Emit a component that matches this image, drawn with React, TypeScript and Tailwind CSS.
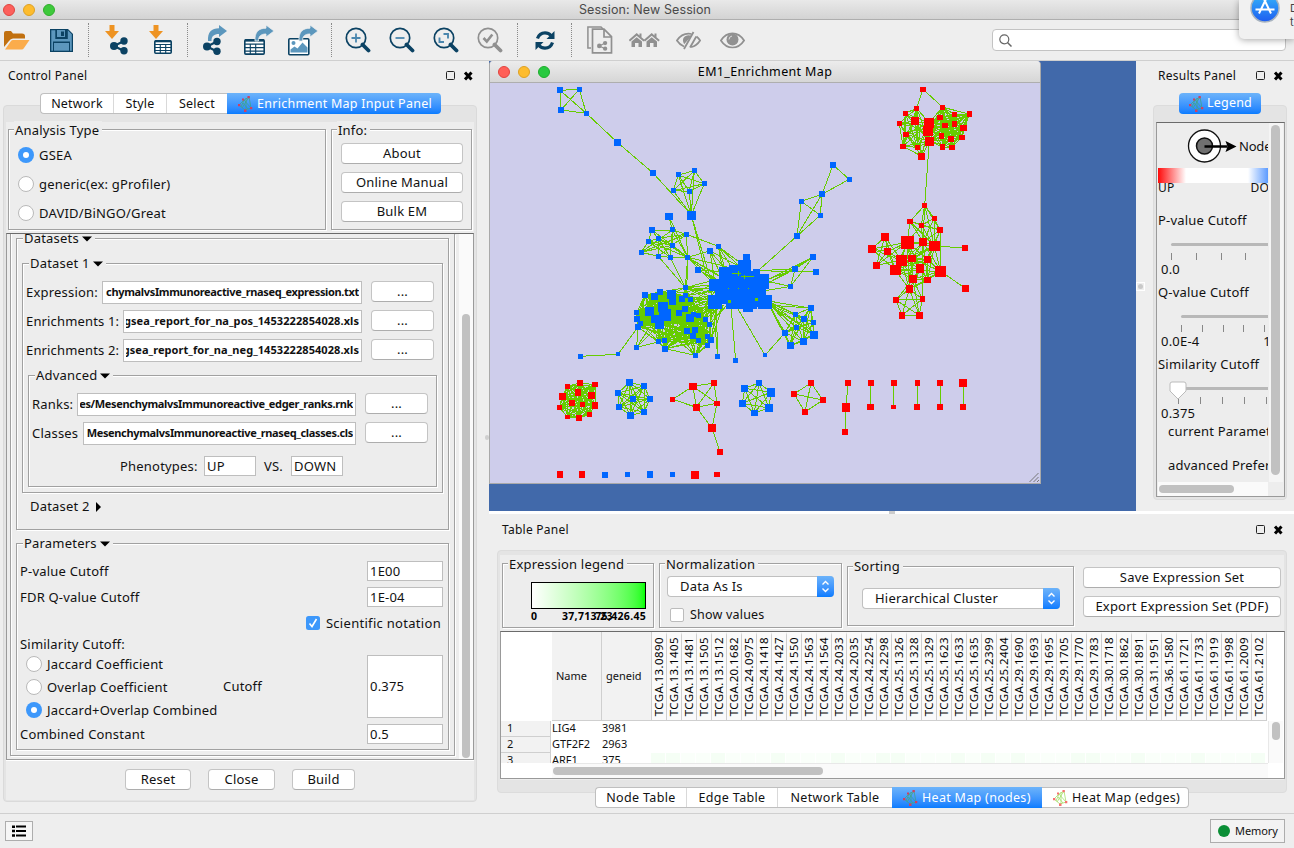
import React from "react";

type Box = [number, number, number, number?];
type Pt = [number, number];

const EDGE = "#66cc00";
const BLUE = "#0066ff";
const RED = "#ff0000";

/* ---------- network data (thirds of a pixel, relative to each origin) ---------- */

const mainOrigin: Pt = [540, 80];
const redOrigin: Pt = [840, 80];
const rowOrigin: Pt = [540, 365];

const square: Box[] = [[60, 31, 18], [118, 28, 15], [63, 90, 18], [139, 100, 15]];
const chain: Box[] = [[232, 187, 20], [339, 279, 18]];
const fan: Box[] = [[415, 285, 16], [463, 272, 15], [493, 311, 16], [400, 332, 15], [448, 334, 15], [454, 405, 27]];
const upperRight: Box[] = [[879, 255, 18], [928, 298, 15], [846, 343, 19], [784, 364, 15], [841, 406, 15], [771, 468, 18]];
const mesh: Box[] = [
  [336, 450, 18], [397, 450, 16], [439, 463, 15], [355, 475, 15], [325, 484, 15],
  [397, 496, 15], [304, 517, 15], [355, 529, 15], [391, 532, 15], [443, 532, 15],
];
const feeders: Box[] = [[510, 513, 18], [535, 499, 15], [474, 569, 18]];
const dense: Box[] = [
  [315, 645, 18], [343, 650, 20], [360, 636, 18], [393, 642, 26], [397, 665, 20], [426, 658, 18], [437, 647, 14],
  [452, 657, 14], [290, 698, 15], [291, 717, 18], [302, 730, 14], [294, 741, 18], [328, 694, 26], [369, 680, 30],
  [375, 705, 36], [345, 717, 24], [358, 733, 28], [416, 700, 18], [435, 687, 18], [450, 713, 24], [460, 702, 14],
  [475, 708, 16], [497, 717, 14], [508, 733, 15], [441, 751, 17], [465, 750, 18], [459, 768, 18], [475, 782, 15],
  [503, 769, 15], [513, 780, 18], [503, 796, 15], [376, 806, 18], [374, 781, 14], [355, 786, 16],
  [466, 826, 15], [290, 802, 15], [436, 623, 15],
];
const outliers: Box[] = [[122, 829, 15], [234, 823, 12], [533, 829, 15], [587, 841, 15], [675, 826, 13], [387, 409, 24, 21]];
const rightMesh: Box[] = [
  [811, 684, 17], [766, 704, 15], [792, 717, 18], [820, 727, 15], [769, 742, 15],
  [735, 758, 18], [822, 763, 23], [789, 784, 20], [750, 797, 20],
];
const sideNodes: Box[] = [[819, 531, 18], [765, 567, 18], [828, 576, 18], [752, 619, 15]];
const core: [number, number, number, number][] = [
  [609, 522, 21, 24], [595, 540, 38, 34], [568, 556, 60, 40], [537, 562, 60, 60], [536, 570, 74, 84], [604, 573, 56, 108],
  [640, 567, 20, 40], [507, 597, 60, 36], [525, 618, 150, 42], [630, 582, 57, 45], [640, 618, 38, 42], [504, 645, 42, 42],
  [540, 636, 132, 36], [655, 645, 41, 42], [558, 660, 24, 27], [582, 654, 70, 33], [609, 669, 30, 27], [600, 600, 40, 60],
];

const redTop: Box[] = [
  [230, 85, 15], [196, 100, 15], [178, 130, 15], [225, 123, 24], [198, 163, 18, 15], [189, 199, 18, 15], [233, 202, 15],
  [245, 229, 21], [267, 128, 30], [264, 152, 30], [268, 184, 27], [308, 82, 15], [343, 103, 15], [388, 102, 15, 18],
  [300, 112, 18, 15], [315, 136, 18, 15], [343, 131, 15, 18], [370, 144, 21, 18], [305, 168, 15, 18], [333, 177, 18],
  [366, 172, 18, 15], [308, 201, 15, 18], [336, 202, 18, 15], [249, 28, 18, 15],
];
const redLow: Box[] = [
  [254, 376, 15], [210, 424, 18, 15], [283, 415, 15], [244, 436, 15], [300, 450, 18], [135, 470, 24], [96, 507, 24],
  [143, 515, 21], [109, 556, 21], [202, 487, 39], [249, 486, 24], [283, 498, 33, 30], [375, 504, 18], [184, 541, 33],
  [216, 535, 24, 21], [263, 538, 21], [166, 570, 33, 30], [240, 565, 24, 27], [302, 574, 33], [219, 597, 24],
  [263, 600, 21, 18], [208, 627, 21, 24], [376, 625, 21], [168, 660, 18], [247, 657, 15, 18], [186, 706, 18, 21], [238, 706, 21],
];

const ball: Box[] = [
  [120, 54, 18], [165, 59, 18, 15], [83, 64, 15], [114, 82, 18, 21], [67, 94, 21], [154, 91, 21], [96, 114, 18],
  [127, 118, 15], [165, 121, 18, 21], [58, 127, 15], [148, 148, 15], [83, 156, 15, 12], [117, 159, 18],
];
const ring: Box[] = [
  [269, 52, 21], [312, 63, 18], [234, 84, 18], [279, 102, 18], [330, 102, 18], [237, 126, 18], [312, 141, 18], [271, 151, 21],
];
const kite: Box[] = [[459, 64, 24, 21], [522, 54, 18], [398, 103, 15], [469, 127, 21], [531, 115, 18, 15], [516, 189, 24], [540, 261, 18]];
const hexa: Box[] = [[657, 54, 18], [614, 70, 21], [693, 82, 24, 27], [607, 115, 21], [687, 129, 24], [643, 144, 21, 18]];
const quad: Box[] = [[813, 54, 18], [762, 87, 18], [849, 105, 18], [795, 141, 18]];
const pairs: Box[] = [
  [924, 54, 18], [918, 127, 24, 27], [915, 201, 18], [993, 54, 18], [991, 126, 21, 18], [1062, 54, 18], [1061, 126, 15, 12],
  [1132, 54, 15, 18], [1131, 126, 18], [1200, 54, 18], [1200, 126, 18], [1269, 54, 24], [1269, 126, 18],
];
const singlesRed: Box[] = [[60, 328, 18, 21], [126, 328, 18, 21], [465, 330, 24], [531, 328, 18, 15]];
const singlesBlue: Box[] = [[195, 330, 18], [262, 328, 15], [330, 328, 18, 21], [397, 328, 15]];

const place = (o: Pt, x: number, y: number): Pt => [o[0] + x / 3, o[1] + y / 3];

function line(o: Pt, a: Box | Pt, b: Box | Pt) {
  const [x1, y1] = place(o, a[0], a[1]);
  const [x2, y2] = place(o, b[0], b[1]);
  return `M${x1.toFixed(1)} ${y1.toFixed(1)}L${x2.toFixed(1)} ${y2.toFixed(1)}`;
}

function clique(o: Pt, list: Box[], keep: (i: number, j: number) => boolean = () => true) {
  let d = "";
  for (let i = 0; i < list.length; i++)
    for (let j = i + 1; j < list.length; j++) if (keep(i, j)) d += line(o, list[i], list[j]);
  return d;
}

const links = (o: Pt, list: Box[], ids: Pt[]) => ids.map(([a, b]) => line(o, list[a], list[b])).join("");
const pick = (list: Box[], ids: number[]) => ids.map((i) => list[i]);

function mainEdges() {
  const o = mainOrigin;
  let d = clique(o, square) + clique(o, fan) + clique(o, rightMesh, (i, j) => (i + j) % 6 !== 5);
  d += line(o, square[3], chain[0]) + line(o, chain[0], chain[1]) + line(o, chain[1], fan[5]);
  d += line(o, fan[5], [500, 590]) + line(o, fan[5], [515, 610]);
  d += links(o, upperRight, [[0, 1], [0, 2], [1, 2], [2, 3], [2, 4], [2, 5], [3, 4], [3, 5], [4, 5]]);
  d += line(o, upperRight[5], [640, 585]);
  d += clique(o, mesh, (i, j) => (i * 3 + j * 5) % 4 < 2 && !(i === 6 && j < 3));
  d += links(o, mesh, [[9, 1], [9, 2], [9, 8], [9, 5], [9, 3], [7, 8], [0, 4], [4, 6], [6, 7], [2, 3], [3, 5], [4, 9], [0, 9], [1, 8]]);
  for (const i of [7, 8, 9]) d += line(o, mesh[i], dense[36]);
  d += line(o, mesh[9], [438, 700]);
  for (const p of [[560, 560], [540, 590], [530, 600], [560, 600], [520, 610]] as Pt[]) d += line(o, mesh[9], p);
  d += line(o, mesh[2], feeders[1]) + line(o, mesh[9], feeders[0]);
  for (const p of [[600, 548], [600, 560], [580, 570], [550, 580], [556, 570]] as Pt[]) d += line(o, feeders[1], p);
  for (const p of [[560, 570], [545, 590], [600, 560], [525, 610]] as Pt[]) d += line(o, feeders[0], p);
  for (const p of [[540, 575], [530, 600], [540, 610]] as Pt[]) d += line(o, feeders[2], p);
  d += line(o, outliers[5], mesh[9]) + line(o, outliers[5], mesh[1]);
  d += clique(o, dense.slice(0, 34), (i, j) => {
    if (j < 20) return true;
    if (i < 20) return (i * 5 + j * 3) % 9 < 3;
    return (i + j) % 2 === 0;
  });
  for (const i of [14, 16, 19, 24, 26, 28, 31, 29, 30]) d += line(o, dense[34], dense[i]);
  for (const i of [11, 16, 15, 33]) d += line(o, dense[35], dense[i]);
  for (const i of [2, 3, 5, 6, 7, 17, 18]) d += line(o, dense[36], dense[i]);
  for (let i = 3; i < 34; i++) {
    if (i >= 8 && i <= 12) continue;
    if (i < 22 || i % 2) d += line(o, dense[i], [515 + ((i * 13) % 50), 605 + ((i * 29) % 75)]);
    if (i % 3 === 0) d += line(o, dense[i], [520, 650 + ((i * 7) % 30)]);
  }
  for (let k = 0; k < 6; k++) d += line(o, dense[36], [515, 602 + k * 12]);
  for (const p of [[510, 680], [530, 680], [550, 675]] as Pt[]) d += line(o, dense[34], p) + line(o, dense[29], p) + line(o, dense[31], p);
  d += links(o, outliers, [[0, 1]]) + line(o, outliers[1], dense[11]);
  d += line(o, outliers[2], [529, 680]) + line(o, outliers[2], [520, 680]) + line(o, outliers[3], [573, 680]);
  d += line(o, outliers[4], [590, 680]) + line(o, outliers[4], rightMesh[5]);
  rightMesh.forEach((n, i) => {
    d += line(o, n, [680, 662]);
    if (i % 2 === 0) d += line(o, n, [690, 676]);
  });
  for (const p of [[680, 600], [680, 612]] as Pt[]) d += line(o, sideNodes[0], p) + line(o, sideNodes[1], p);
  d += line(o, sideNodes[1], [650, 572]) + line(o, sideNodes[2], [650, 572]);
  d += line(o, sideNodes[3], [670, 602]) + line(o, sideNodes[3], [670, 633]);
  d += links(o, sideNodes, [[0, 1], [0, 3], [1, 3]]);
  return d;
}

function redEdges() {
  const o = redOrigin;
  let d = clique(o, redTop.slice(0, 11), (i, j) => (i * 2 + j) % 5 !== 4) + clique(o, redTop.slice(8, 23));
  d += links(o, redTop, [[23, 0], [23, 11], [5, 7], [2, 5], [10, 7]]) + line(o, redTop[10], redLow[0]);
  d += clique(o, pick(redLow, [5, 6, 7, 8, 9, 13, 16]), (i, j) => (i + j) % 5 !== 4);
  d += clique(o, pick(redLow, [0, 1, 2, 3, 4, 9, 10, 11]), (i, j) => (i * 3 + j) % 6 !== 5);
  d += clique(o, pick(redLow, [9, 10, 11, 13, 14, 15, 16, 17, 18, 19, 20, 21]), (i, j) => (i + j * 2) % 4 !== 3);
  d += clique(o, pick(redLow, [21, 23, 24, 25, 26]));
  d += links(o, redLow, [[11, 12], [18, 22], [19, 24], [19, 26], [10, 24], [19, 23], [4, 18], [4, 15]]);
  return d;
}

function rowEdges() {
  const o = rowOrigin;
  return (
    clique(o, ball) + clique(o, ring) + clique(o, hexa) + clique(o, quad) +
    links(o, kite, [[0, 1], [0, 2], [0, 3], [0, 4], [1, 3], [1, 4], [2, 3], [3, 4], [3, 5], [4, 5], [5, 6]]) +
    links(o, pairs, [[0, 1], [1, 2], [3, 4], [5, 6], [7, 8], [9, 10], [11, 12]])
  );
}

function Nodes({ origin, list, color }: { origin: Pt; list: Box[]; color: string }) {
  return (
    <g fill={color}>
      {list.map(([x, y, w, h = w], i) => {
        const [px, py] = place(origin, x - w / 2, y - h / 2);
        return <rect key={i} x={Math.round(px)} y={Math.round(py)} width={Math.round(w / 3)} height={Math.round(h / 3)} />;
      })}
    </g>
  );
}

function NetworkCanvas() {
  return (
    <svg className="block h-[400px] w-[550px]" viewBox="490 83 550 400" shapeRendering="crispEdges">
      <g stroke={EDGE} strokeWidth="1" fill="none">
        <path d={mainEdges()} />
        <path d={redEdges()} />
        <path d={rowEdges()} />
      </g>
      <Nodes origin={mainOrigin} color={BLUE} list={[...square, ...chain, ...fan, ...upperRight, ...mesh, ...feeders, ...dense, ...outliers, ...rightMesh, ...sideNodes]} />
      <g fill={BLUE}>
        {core.map(([x, y, w, h], i) => (
          <rect key={i} x={Math.round(540 + x / 3)} y={Math.round(80 + y / 3)} width={Math.round(w / 3)} height={Math.round(h / 3)} />
        ))}
      </g>
      <path d="M731.5 273.5h9M738.5 271v5M740.5 276.5h13M744.5 275v4" stroke={EDGE} fill="none" />
      <path d="M728 300h3v3h-3zM755 298h3v3h-3zM728 288h1v1h-1zM738 288h1v1h-1zM748 288h1v1h-1z" fill={EDGE} />
      <Nodes origin={redOrigin} color={RED} list={[...redTop, ...redLow]} />
      <Nodes origin={rowOrigin} color={RED} list={[...ball, ...kite, ...quad, ...pairs, ...singlesRed]} />
      <Nodes origin={rowOrigin} color={BLUE} list={[...ring, ...hexa, ...singlesBlue]} />
      <path d="M1029.5 482l9-9M1033.5 482l5-5M1037 482l2-2" stroke="#777" fill="none" shapeRendering="auto" />
    </svg>
  );
}

/* ---------- small widgets ---------- */

function Group({ title, className, titleClass = "ml-[5px] pt-[2px]", children }: { title: React.ReactNode; className: string; titleClass?: string; children?: React.ReactNode }) {
  return (
    <div className={`border border-[#a1a1a1] shadow-[1px_1px_0_#fff,inset_1px_1px_0_#fff] ${className}`}>
      <div className={`-mt-[9px] flex h-[18px] w-fit items-center bg-[#ededed] pr-[3px] pl-px ${titleClass}`}>{title}</div>
      {children}
    </div>
  );
}

function Button({ className = "", children }: { className?: string; children: React.ReactNode }) {
  return (
    <button className={`flex h-[21px] shrink-0 items-center justify-center rounded-[4px] border border-[#c4c4c4] border-b-[#adadad] bg-white leading-[19px] ${className}`}>
      {children}
    </button>
  );
}

function Field({ className = "", children }: { className?: string; children: React.ReactNode }) {
  return <div className={`flex shrink-0 items-center overflow-hidden border border-[#bebebe] bg-white px-[2px] ${className}`}>{children}</div>;
}

function PathField({ className, tight, children }: { className: string; tight: boolean; children: React.ReactNode }) {
  return (
    <Field className={`h-[23px] ${className}`}>
      <div className={`flex flex-1 justify-end overflow-hidden text-[11px] font-bold whitespace-nowrap ${tight ? "tracking-[-0.34px]" : "tracking-[0.07px]"}`}>
        <span>{children}</span>
      </div>
    </Field>
  );
}

function Radio({ on = false, children }: { on?: boolean; children: React.ReactNode }) {
  return (
    <label className="flex h-[17px] items-center gap-[5px]">
      {on ? (
        <span className="flex h-4 w-4 items-center justify-center rounded-full bg-[#3d98fb]">
          <span className="h-[6px] w-[6px] rounded-full bg-white" />
        </span>
      ) : (
        <span className="h-4 w-4 rounded-full border border-[#b9b9b9] bg-white" />
      )}
      <span className="pt-[2px]">{children}</span>
    </label>
  );
}

const Down = () => (
  <svg className="ml-[3px] h-[6px] w-[10px]" viewBox="0 0 10 6"><path d="M0 .5h10L5 5.500z" /></svg>
);

function PanelHeader({ title, className = "" }: { title: string; className?: string }) {
  return (
    <div className={`flex h-[30px] items-center justify-between ${className}`}>
      <span className="text-[12px] tracking-[0.25px]">{title}</span>
      <svg className="h-[12px] w-[28px]" viewBox="0 0 28 12">
        <rect x="1.5" y="1.5" width="8" height="8" rx="1" fill="none" stroke="#222" />
        <path d="M20 2.500l6.500 7M26.500 2.500l-6.500 7" stroke="#000" strokeWidth="3" />
      </svg>
    </div>
  );
}

function MapIcon({ light = false }: { light?: boolean }) {
  return (
    <svg className="h-4 w-[15px] shrink-0" viewBox="0 0 15 16">
      <path d="M6 4l5-3 2 11-6 2-6-5zM6 4l7 8M6 4L3 11M11 1L4 12M5 7l5 6M8 2v12" stroke={light ? "#a5e06a" : "#3fa58a"} strokeWidth=".8" fill="none" />
      <path d="M4 2.500h2v2H4zM9.500 0h2.300v2.300H9.500zM0 8h2.300v2.300H0zM12 11h2.300v2.300H12zM6 13.500h2.500V16H6z" fill={light ? "#f7716f" : "#d2405f"} />
    </svg>
  );
}

function Lights({ title = false }: { title?: boolean }) {
  return (
    <div className="flex gap-[8px]">
      <span className={`h-3 w-3 rounded-full border border-[#e0443e] ${title ? "bg-[#fc605c]" : "bg-[#ff5f57]"}`} />
      <span className="h-3 w-3 rounded-full border border-[#dea123] bg-[#fdbc2e]" />
      <span className={`h-3 w-3 rounded-full border ${title ? "border-[#2fae2b] bg-[#3ec93b]" : "border-[#1dad2b] bg-[#28c940]"}`} />
    </div>
  );
}

function Stepper() {
  return (
    <span className="flex h-[21px] w-[17px] items-center justify-center rounded-r-[4px] bg-linear-to-b from-[#6cb3fa] to-[#077cff]">
      <svg className="h-[13px] w-[9px]" viewBox="0 0 9 13">
        <path d="M1.500 4.500l3-3 3 3M1.500 8.500l3 3 3-3" stroke="#fff" strokeWidth="1.4" fill="none" />
      </svg>
    </span>
  );
}

function Select({ className, children }: { className: string; children: React.ReactNode }) {
  return (
    <div className={`flex h-[21px] items-center justify-between rounded-[4px] border border-r-0 border-[#c0c0c0] bg-white pl-[12px] ${className}`}>
      <span>{children}</span>
      <Stepper />
    </div>
  );
}

/* ---------- toolbar ---------- */

const NAVY = "#0b4263";
const SKY = "#5c97bd";
const GREY = "#909090";

const Sep = () => <div className="h-[34px] w-0 border-l border-dotted border-[#8a8a8a]" />;

function ShareGlyph({ color = NAVY }: { color?: string }) {
  return (
    <g fill={color}>
      <path d="M4 8.500L14 3.500M4 8.500l10 5" stroke={color} strokeWidth="2" />
      <circle cx="4" cy="8.500" r="4" /><circle cx="14" cy="3.500" r="3.700" /><circle cx="14" cy="13.300" r="3.700" />
    </g>
  );
}

function GridGlyph({ w = 18 }: { w?: number }) {
  return (
    <g fill="none" stroke={NAVY}>
      <rect x=".8" y=".8" width={w - 1.6} height="12.400" rx="1" fill="#fff" strokeWidth="1.6" />
      <path d={`M1 4.500h${w - 2}M1 7.500h${w - 2}M1 10.500h${w - 2}M6.300 4v9M11.700 4v9`} strokeWidth="1.100" />
      <path d={`M1 1.300h${w - 2}`} strokeWidth="2" />
    </g>
  );
}

const ArrowDown = () => <path d="M4.500 0h5v6h4.500L7 14 0 6h4.500z" fill="#ee9322" />;
const ArrowOut = () => <path d="M0 16C-.5 7 3.500 3.200 11 3.200V0l8 6-8 6V9C6 9 3.500 11 3.500 16z" fill={SKY} />;

function Magnifier({ color = NAVY, children }: { color?: string; children: React.ReactNode }) {
  return (
    <svg className="h-[26px] w-[26px]" viewBox="0 0 26 26" fill="none">
      <circle cx="11" cy="11" r="9.700" stroke={color} strokeWidth="1.700" />
      <path d="M17.500 17.500l6 6" stroke={color} strokeWidth="3.800" strokeLinecap="round" />
      {children}
    </svg>
  );
}

function House({ x }: { x: number }) {
  return (
    <g transform={`translate(${x} 0)`} fill={GREY}>
      <path d="M7.700 0L-.3 7l1.300 1.400L7.700 2.700l6.800 5.700L15.800 7 12.500 4.200V.6h-2v1.900z" />
      <path d="M2.500 8.600l5.200-4.400 5.300 4.400V14H9.500v-4H6v4H2.500z" />
    </g>
  );
}

function Toolbar() {
  return (
    <div className="relative flex h-[41px] shrink-0 items-center border-b border-[#cfcfcf] bg-[#eeeeee]">
      <svg className="ml-[4px] h-[19px] w-[26px]" viewBox="0 0 26 19">
        <path d="M0 16V2Q0 0 2 0h5l2 2.500h9Q21 2.500 21 5v2.500H9Q6.500 7.500 5 10z" fill="#c1700f" />
        <path d="M1 18.500l6-8.500q.8-1 2-1h16.500L20 17q-.8 1.500-2.500 1.500z" fill="#fbac4b" />
      </svg>
      <svg className="ml-[20px] h-[23px] w-[23px]" viewBox="0 0 23 23">
        <path d="M0 0h18l5 5v18H0z" fill={NAVY} />
        <path d="M1.300 1.300h4V10h12.500V1.300l4 4V21.700H20v-9.200H3v9.200H1.300z" fill={SKY} />
        <path d="M7 1h8v7H7z" fill={SKY} /><path d="M11 2.500h3v4.500h-3z" fill={NAVY} />
        <path d="M4 14h15v7.700H4z" fill={SKY} />
      </svg>
      <div className="ml-[15px]"><Sep /></div>
      <svg className="ml-[16px] h-[30px] w-[24px]" viewBox="0 0 24 30">
        <ArrowDown />
        <g transform="translate(5 12.500)"><ShareGlyph /></g>
      </svg>
      <svg className="ml-[20px] h-[30px] w-[24px]" viewBox="0 0 24 30">
        <ArrowDown />
        <g transform="translate(5 15)"><GridGlyph /></g>
      </svg>
      <div className="ml-[14px]"><Sep /></div>
      <svg className="ml-[15px] h-[31px] w-[26px]" viewBox="0 0 26 31">
        <g transform="translate(5 0)"><ArrowOut /></g>
        <g transform="translate(0 13)"><ShareGlyph /></g>
      </svg>
      <svg className="ml-[15px] h-[31px] w-[31px]" viewBox="0 0 31 31">
        <g transform="translate(0 14) scale(1 1.150)"><GridGlyph w={21} /></g>
        <g transform="translate(11 0)" stroke="#eee" strokeWidth=".8"><ArrowOut /></g>
      </svg>
      <svg className="ml-[13px] h-[31px] w-[31px]" viewBox="0 0 31 31">
        <rect x=".8" y="13.800" width="20" height="16" rx="1" fill="#fff" stroke={NAVY} strokeWidth="1.600" />
        <path d="M2.500 27.500v-3l4-3 3 2 5-6 5 5v5z" fill={SKY} /><circle cx="5.500" cy="18" r="2" fill={SKY} />
        <g transform="translate(11 0)" stroke="#eee" strokeWidth=".8"><ArrowOut /></g>
      </svg>
      <div className="ml-[12px]"><Sep /></div>
      <div className="ml-[13px] flex gap-[18px]">
        <Magnifier><path d="M6.500 11h9M11 6.500v9" stroke="#4b87ae" strokeWidth="1.800" /></Magnifier>
        <Magnifier><path d="M6.500 11h9" stroke="#4b87ae" strokeWidth="1.800" /></Magnifier>
        <Magnifier><path d="M10.500 7H15v4.500M6.500 10.500V15H11" stroke="#4b87ae" strokeWidth="1.900" /></Magnifier>
        <Magnifier color={GREY}><path d="M6.500 11l3.300 3.500 5.500-7" stroke={GREY} strokeWidth="2.600" /></Magnifier>
      </div>
      <div className="ml-[14px]"><Sep /></div>
      <svg className="ml-[17px] h-[19px] w-[20px]" viewBox="0 0 20 19" fill="none">
        <path d="M2.500 7.500C4 3 7 1.800 10 1.800c2.500 0 4.500 1 6 2.700M17.500 11.500c-1.500 4.500-4.500 5.700-7.500 5.700-2.500 0-4.500-1-6-2.700" stroke={NAVY} strokeWidth="3.200" />
        <path d="M19.500 0v8H11.500zM.5 19v-8h8z" fill={NAVY} />
      </svg>
      <div className="ml-[16px]"><Sep /></div>
      <svg className="ml-[15px] h-[28px] w-[26px]" viewBox="0 0 26 28" fill="none">
        <path d="M4 22H.9V.9H14L16 3" stroke={GREY} strokeWidth="1.500" />
        <path d="M5.500 3.200H17l7.500 7.500v16.200h-19zM17 3.200V11h7.500" stroke={GREY} strokeWidth="1.700" />
        <g transform="translate(10 15) scale(.58)"><ShareGlyph color={GREY} /></g>
      </svg>
      <svg className="ml-[16px] h-[14px] w-[31px]" viewBox="0 0 31 14"><House x={0} /><House x={15} /></svg>
      <svg className="ml-[16px] h-[19px] w-[25px]" viewBox="0 0 25 19" fill="none">
        <path d="M8 15.500C4.500 14 2.200 11.500.9 9.500 3.500 5.500 7.500 2.600 12.500 2.600q1.500 0 3 .4M20.500 5.500q2.200 1.700 3.600 4c-2 3.200-5 5.700-9 6.600" stroke={GREY} strokeWidth="1.700" />
        <path d="M8.200 13.200C5 8 8.500 4.200 12.500 4.200l3 .6z" fill={GREY} />
        <path d="M17.500 1L8 18M20.300 5.500L14 16.500" stroke={GREY} strokeWidth="1.800" />
      </svg>
      <svg className="ml-[19px] h-[17px] w-[25px]" viewBox="0 0 25 17" fill="none">
        <path d="M.9 8.500C3.500 4.500 7.500 1.400 12.500 1.400S21.500 4.500 24.100 8.500C21.500 12.500 17.500 15.500 12.500 15.500S3.500 12.500.9 8.500z" stroke={GREY} strokeWidth="1.700" />
        <circle cx="12.500" cy="7.500" r="6" fill={GREY} /><path d="M9 7.500Q9 4.500 12 4" stroke="#ddd" strokeWidth="1" />
      </svg>
      <div className="mr-[8px] ml-auto flex h-[22px] w-[294px] items-center rounded-[4px] border border-[#c3c3c3] bg-white pl-[6px]">
        <svg className="h-[13px] w-[13px]" viewBox="0 0 13 13" fill="none" stroke="#666" strokeWidth="1.200">
          <circle cx="5.300" cy="5.300" r="4.500" /><path d="M8.500 8.500l4 4" strokeWidth="1.500" />
        </svg>
      </div>
    </div>
  );
}

function Notification() {
  return (
    <div className="absolute top-0 right-0 z-20 h-[39px] w-[55px] overflow-hidden rounded-bl-[5px] bg-[#f1f1f1] shadow-[0_1px_7px_rgba(0,0,0,0.35)]">
      <svg className="absolute -top-[7px] left-[11px] h-[30px] w-[30px]" viewBox="0 0 30 30">
        <defs>
          <linearGradient id="store" x1="0" y1="0" x2="0" y2="1"><stop offset="0" stopColor="#35b6fb" /><stop offset="1" stopColor="#1d5cf0" /></linearGradient>
        </defs>
        <circle cx="15" cy="15" r="14" fill="url(#store)" stroke="#a9b4bf" strokeWidth="1.500" />
        <path d="M16.500 5L9 20.500M13.500 5L21 20.500M5.500 16.500h19" stroke="#fff" strokeWidth="2" fill="none" />
      </svg>
      <div className="absolute top-px left-[51px] font-['Inter'] text-[11px] leading-[14px] text-[#444]">
        <div>D</div>
        <div>t</div>
      </div>
    </div>
  );
}

/* ---------- control panel ---------- */

function FileRow({ label, labelClass, fieldClass, file, tight = false }: { label: string; labelClass: string; fieldClass: string; file: string; tight?: boolean }) {
  return (
    <div className="mb-[6px] flex h-[23px] pl-[3px]">
      <span className={`shrink-0 leading-[23px] whitespace-nowrap ${labelClass}`}>{label}</span>
      <PathField className={fieldClass} tight={tight}>{file}</PathField>
      <Button className="ml-[9px] w-[63px]">...</Button>
    </div>
  );
}

function ParamRow({ label, value }: { label: string; value: string }) {
  return (
    <div className="mb-[6px] flex h-[20px] items-center justify-between">
      <span className="pt-[2px]">{label}</span>
      <Field className="h-[20px] w-[76px] pt-[2px]">{value}</Field>
    </div>
  );
}

function ControlPanel() {
  return (
    <section className="w-[485px] shrink-0">
      <PanelHeader title="Control Panel" className="pr-[12px] pl-[8px]" />
      <div className="relative z-10 mt-[2px] -mb-[9px] ml-[40px] flex h-[21px] w-[401px] text-[12.5px] leading-[19px]">
        <div className="flex w-[187px] rounded-l-[4px] border border-r-0 border-[#bfbfbf] bg-white">
          <span className="w-[73px] border-r border-[#d9d9d9] text-center">Network</span>
          <span className="w-[53px] border-r border-[#d9d9d9] text-center">Style</span>
          <span className="flex-1 text-center">Select</span>
        </div>
        <div className="flex w-[214px] items-center rounded-r-[4px] bg-linear-to-b from-[#6cb3fa] to-[#077cff] pl-[11px] text-white">
          <MapIcon /><span className="ml-[4px] tracking-[0.27px] whitespace-nowrap">Enrichment Map Input Panel</span>
        </div>
      </div>
      <div className="ml-[3px] h-[697px] w-[474px] rounded-[4px] border border-[#dadada] bg-[#e4e4e4] px-[2px] pt-[16px]">
        <div className="h-[678px] bg-[#ededed] pt-[7px]">
          <div className="ml-[2px] flex gap-[5px]">
            <Group title="Analysis Type" className="h-[101px] w-[318px]">
              <div className="mt-[7px] flex flex-col gap-[12px] pl-[9px]">
                <Radio on>GSEA</Radio>
                <Radio>generic(ex: gProfiler)</Radio>
                <Radio>DAVID/BiNGO/Great</Radio>
              </div>
            </Group>
            <Group title="Info:" className="h-[101px] w-[141px]">
              <div className="mt-[4px] flex flex-col gap-[8px] pl-[9px]">
                <Button className="w-[122px]">About</Button>
                <Button className="w-[122px]">Online Manual</Button>
                <Button className="w-[122px]">Bulk EM</Button>
              </div>
            </Group>
          </div>
          <div className="mt-[3px] flex h-[527px] w-[468px] overflow-hidden border border-[#9a9a9a] border-t-[#6b6b6b] shadow-[0_1px_0_#fff]">
            <div className="ml-[3px] h-[522px] w-[445px] shrink-0 border border-t-0 border-[#a1a1a1] pt-[4px] shadow-[1px_1px_0_#fff,inset_1px_0_0_#fff]">
              <Group title={<>Datasets<Down /></>} className="ml-[5px] h-[292px] w-[433px]" titleClass="ml-[6px]">
                <Group title={<>Dataset 1<Down /></>} className="mt-[15px] ml-[5px] h-[230px] w-[421px]" titleClass="ml-[6px]">
                  <div className="h-[8px]" />
                  <FileRow label="Expression:" labelClass="w-[76px] tracking-[0.2px]" fieldClass="w-[260px]" file="chymalvsImmunoreactive_rnaseq_expression.txt" tight />
                  <FileRow label="Enrichments 1:" labelClass="w-[97px] tracking-[0.15px]" fieldClass="w-[239px]" file="gsea_report_for_na_pos_1453222854028.xls" />
                  <FileRow label="Enrichments 2:" labelClass="w-[97px] tracking-[0.15px]" fieldClass="w-[239px]" file="gsea_report_for_na_neg_1453222854028.xls" />
                  <Group title={<>Advanced<Down /></>} className="mt-[13px] ml-[5px] h-[112px] w-[409px]" titleClass="ml-[6px]">
                    <div className="h-[8px]" />
                    <FileRow label="Ranks:" labelClass="w-[45px]" fieldClass="w-[279px]" file="es/MesenchymalvsImmunoreactive_edger_ranks.rnk" tight />
                    <FileRow label="Classes" labelClass="w-[51px]" fieldClass="w-[273px]" file="MesenchymalvsImmunoreactive_rnaseq_classes.cls" tight />
                    <div className="mt-[11px] flex h-[20px] items-center pl-[91px]">
                      <span className="w-[84px] pt-[2px]">Phenotypes:</span>
                      <Field className="h-[20px] w-[52px] pt-[2px]">UP</Field>
                      <span className="w-[35px] pt-[2px] pl-[8px]">VS.</span>
                      <Field className="h-[20px] w-[52px] pt-[2px]">DOWN</Field>
                    </div>
                  </Group>
                </Group>
                <div className="mt-[5px] ml-[13px] flex h-[18px] items-center">
                  Dataset 2
                  <svg className="ml-[6px] h-[10px] w-[5px]" viewBox="0 0 5 10"><path d="M0 0v10l5-5z" /></svg>
                </div>
              </Group>
              <Group title={<>Parameters<Down /></>} className="mt-[13px] ml-[5px] h-[207px] w-[433px]" titleClass="ml-[6px]">
                <div className="pt-[8px] pr-[5px] pl-[3px]">
                  <ParamRow label="P-value Cutoff" value="1E00" />
                  <ParamRow label="FDR Q-value Cutoff" value="1E-04" />
                  <div className="mt-[7px] flex h-[18px] items-center justify-end pr-[2px]">
                    <svg className="mr-[6px] h-[14px] w-[14px]" viewBox="0 0 14 14">
                      <rect width="14" height="14" rx="2.500" fill="#3d98fb" />
                      <path d="M3.500 7.500l2.500 3 4.500-7.500" stroke="#fff" strokeWidth="1.600" fill="none" />
                    </svg>
                    <span className="pt-[2px] tracking-[0.3px]">Scientific notation</span>
                  </div>
                  <div className="mt-[3px] h-[18px] leading-[18px]">Similarity Cutoff:</div>
                  <div className="mt-[2px] flex h-[63px] items-center">
                    <div className="flex h-[63px] w-[203px] flex-col justify-between pl-[6px]">
                      <Radio>Jaccard Coefficient</Radio>
                      <Radio>Overlap Coefficient</Radio>
                      <Radio on>Jaccard+Overlap Combined</Radio>
                    </div>
                    <span>Cutoff</span>
                    <Field className="ml-auto h-[63px] w-[76px]">0.375</Field>
                  </div>
                  <div className="h-[6px]" />
                  <ParamRow label="Combined Constant" value="0.5" />
                </div>
              </Group>
            </div>
            <div className="ml-[4px] flex w-[14px] justify-center bg-[#fafafa] pt-[80px]">
              <div className="h-[444px] w-[8px] rounded-full bg-[#c1c1c1]" />
            </div>
          </div>
          <div className="mt-[9px] ml-[119px] flex gap-[17px]">
            <Button className="w-[66px]">Reset</Button>
            <Button className="w-[67px]">Close</Button>
            <Button className="w-[63px]">Build</Button>
          </div>
        </div>
      </div>
    </section>
  );
}

/* ---------- results panel ---------- */

function Slider({ label, value, end, track, ticks, thumb = false }: { label: string; value: string; end?: string; track: string; ticks: number[]; thumb?: boolean }) {
  return (
    <div className="mb-[5px]">
      <div className="h-[18px] leading-[18px]">{label}</div>
      <div className="relative mt-[14px] h-[17px]">
        <div className={`h-[3px] rounded-l-full bg-[#b8b8b8] ${track}`} />
        <svg className="mt-[7px] block h-[7px] w-[110px]" viewBox="0 0 110 7" shapeRendering="crispEdges">
          <path d={ticks.map((t) => `M${t}.5 0v7`).join("")} stroke="#888" />
        </svg>
        {thumb && (
          <svg className="absolute -top-[6px] left-[11px] h-[19px] w-[18px]" viewBox="0 0 18 19">
            <path d="M1 3q0-2 2-2h12q2 0 2 2v7l-8 8-8-8z" fill="#fff" stroke="#bbb" />
          </svg>
        )}
      </div>
      <div className="flex h-[18px] justify-between pl-[3px] leading-[18px]"><span>{value}</span><span className="-mr-[3px]">{end}</span></div>
    </div>
  );
}

function ResultsPanel() {
  return (
    <section className="w-[149px] shrink-0">
      <PanelHeader title="Results Panel" className="pr-[11px] pl-[13px]" />
      <div className="relative z-10 mt-[2px] -mb-[9px] ml-[34px] flex h-[21px] w-[82px] items-center rounded-[4px] bg-linear-to-b from-[#6cb3fa] to-[#077cff] pl-[10px] text-[12.5px] text-white">
        <MapIcon /><span className="ml-[3px]">Legend</span>
      </div>
      <div className="ml-[8px] h-[395px] w-[134px] rounded-[4px] border border-[#dcdcdc] bg-[#e4e4e4] px-[2px] pt-[16px]">
        <div className="flex h-[375px] w-[129px] border border-[#9a9a9a] border-t-[#6b6b6b] bg-[#ededed]">
          <div className="ml-px w-[110px]">
            <div className="h-[359px] overflow-hidden whitespace-nowrap">
              <div className="flex h-[45px] items-center pl-[29px]">
                <svg className="h-[36px] w-[52px] shrink-0" viewBox="0 0 52 36">
                  <circle cx="17.500" cy="18" r="16" fill="#fff" stroke="#111" strokeWidth="1.300" />
                  <circle cx="17.500" cy="18" r="8" fill="#707070" stroke="#111" strokeWidth="1.500" />
                  <path d="M17.500 18.500h23" stroke="#000" strokeWidth="2.500" /><path d="M38.500 13l11 5.500-11 5.500 2-5.500z" />
                </svg>
                <span className="pt-[2px] text-[13px] tracking-[-0.2px]">Node</span>
              </div>
              <div className="h-[15px] bg-[linear-gradient(90deg,#ff0a0a_0,#fff_28px,#fff_90px,#5c9bff_110px)]" />
              <div className="flex h-[12px] justify-between text-[12px] leading-[10px]"><span>UP</span><span className="-mr-[1px]">DO</span></div>
              <div className="h-[16px]" />
              <Slider label="P-value Cutoff" value="0.0" track="ml-[13px]" ticks={[13, 38, 63, 87]} />
              <Slider label="Q-value Cutoff" value="0.0E-4" end="1" track="ml-[23px]" ticks={[23, 44, 65, 85, 106]} />
              <Slider label="Similarity Cutoff" value="0.375" track="ml-[22px]" ticks={[20, 42, 64, 86, 108]} thumb />
              <div className="-mt-[5px] h-[18px] pl-[10px] leading-[18px]">current Parameters</div>
              <div className="mt-[16px] h-[18px] pl-[10px] leading-[18px]">advanced Preferences</div>
            </div>
            <div className="flex h-[14px] items-center bg-[#fafafa] pl-px"><div className="h-[8px] w-[75px] rounded-full bg-[#c1c1c1]" /></div>
          </div>
          <div className="ml-px h-[359px] w-[14px] bg-[#f5f5f5] pt-[2px] pl-[2px]"><div className="h-[350px] w-[9px] rounded-full bg-[#c1c1c1]" /></div>
        </div>
      </div>
    </section>
  );
}

/* ---------- table panel ---------- */

const samples: [string, string[]][] = [
  ["13", ["0890", "1405", "1481", "1505", "1512"]],
  ["20", ["1682"]],
  ["24", ["0975", "1418", "1427", "1550", "1563", "1564", "2033", "2035", "2254", "2298"]],
  ["25", ["1326", "1328", "1329", "1623", "1633", "1635", "2399", "2404"]],
  ["29", ["1690", "1693", "1695", "1705", "1770", "1783"]],
  ["30", ["1718", "1862", "1891"]],
  ["31", ["1951"]],
  ["36", ["1580"]],
  ["61", ["1721", "1733", "1919", "1998", "2009", "2102"]],
];
const columns = samples.flatMap(([site, ids]) => ids.map((id) => `TCGA.${site}.${id}`));
const genes = [["1", "LIG4", "3981"], ["2", "GTF2F2", "2963"], ["3", "ARF1", "375"]];

function DataTable() {
  return (
    <div className="flex h-[148px] w-[785px] flex-col overflow-hidden border border-[#999] border-t-[#6b6b6b] bg-white text-[11px] tracking-normal">
      <div className="flex h-[89px] shrink-0">
        <div className="w-[51px]" />
        <div className="flex border-b border-[#cfcfcf] bg-[#f2f2f2]">
          <div className="flex w-[50px] items-center border-r border-[#cfcfcf] pl-[4px]">Name</div>
          <div className="flex w-[50px] items-center border-r border-[#cfcfcf] pl-[4px]">geneid</div>
          {columns.map((c) => (
            <div key={c} className="flex w-[15px] items-center justify-center border-t-[3px] border-r border-[#cfcfcf] border-t-[#fafafa] bg-[#fafafa] pb-px">
              <span className="rotate-180 text-[11.5px] leading-[14px] tracking-[0.4px] whitespace-nowrap text-black [writing-mode:vertical-rl]">{c}</span>
            </div>
          ))}
        </div>
      </div>
      <div className="flex h-[42px] shrink-0">
        <div className="w-[767px] overflow-hidden">
          {genes.map(([n, name, id], row) => (
            <div key={n} className="flex h-[16px] leading-[14px]">
              <div className="w-[50px] border-r border-b border-[#cfcfcf] bg-[#f2f2f2] pl-[6px]">{n}</div>
              <div className="w-[50px] pl-px">{name}</div>
              <div className="w-[50px] pl-px">{id}</div>
              {row === 2 && columns.map((c, i) => (
                <div key={c} className={`mr-[1px] w-[14px] ${i % 4 === 0 || i % 7 === 1 ? "bg-[#f5fef5]" : "bg-[#fafffa]"}`} />
              ))}
            </div>
          ))}
        </div>
        <div className="flex w-[15px] justify-center border-l border-[#e8e8e8] bg-[#fafafa] pt-[1px]"><div className="h-[18px] w-[8px] rounded-full bg-[#c1c1c1]" /></div>
      </div>
      <div className="ml-[51px] flex h-[15px] w-[716px] items-center border-t border-[#e8e8e8] bg-[#fafafa] pb-px pl-px">
        <div className="h-[8px] w-[270px] rounded-full bg-[#c1c1c1]" />
      </div>
    </div>
  );
}

function TablePanel() {
  return (
    <section className="relative h-[299px]">
      <PanelHeader title="Table Panel" className="pt-[1px] pr-[11px] pl-[13px]" />
      <div className="mt-[6px] ml-[8px] h-[243px] w-[790px] rounded-[4px] border border-[#dcdcdc] bg-[#e4e4e4] px-[2px] pt-[4px]">
        <div className="h-[225px] bg-[#ededed]">
          <div className="flex h-[76px] pt-[8px] pl-[2px]">
            <Group title="Expression legend" className="h-[65px] w-[152px]">
              <div className="mt-[9px] ml-[28px] h-[27px] w-[115px] border border-black bg-linear-to-r from-white to-[#00ff00]" />
              <div className="relative ml-[28px] h-[14px] w-[115px] text-[10.5px] leading-[14px] font-bold tracking-[0.3px] text-black">
                <span>0</span>
                <span className="absolute left-[31px]">37,713.23</span>
                <span className="absolute right-0">75,426.45</span>
              </div>
            </Group>
            <Group title="Normalization" className="ml-[5px] h-[65px] w-[183px]">
              <Select className="mt-[3px] ml-[7px] w-[167px]">Data As Is</Select>
              <div className="mt-[10px] ml-[10px] flex h-[15px] items-center text-[12.5px]">
                <span className="mr-[6px] h-[14px] w-[14px] rounded-[2px] border border-[#bcbcbc] bg-white" /><span className="pt-[2px]">Show values</span>
              </div>
            </Group>
            <Group title="Sorting" className="mt-[3px] ml-[5px] h-[60px] w-[227px]" titleClass="ml-[5px]">
              <Select className="mt-[12px] ml-[14px] w-[198px]">Hierarchical Cluster</Select>
            </Group>
            <div className="mt-[4px] ml-[9px] flex flex-col gap-[8px]">
              <Button className="w-[198px]">Save Expression Set</Button>
              <Button className="w-[198px]">Export Expression Set (PDF)</Button>
            </div>
          </div>
          <DataTable />
        </div>
      </div>
      <div className="relative z-10 -mt-[6px] ml-[106px] flex h-[21px] w-[594px] text-[12.5px] leading-[19px] whitespace-nowrap">
        <div className="flex w-[297px] rounded-l-[4px] border border-r-0 border-[#bfbfbf] bg-white tracking-[0.35px]">
          <span className="w-[91px] border-r border-[#d9d9d9] text-center">Node Table</span>
          <span className="w-[91px] border-r border-[#d9d9d9] text-center">Edge Table</span>
          <span className="flex-1 text-center">Network Table</span>
        </div>
        <div className="flex w-[150px] items-center bg-linear-to-b from-[#6cb3fa] to-[#077cff] pl-[11px] text-white">
          <MapIcon /><span className="ml-[4px] tracking-[0.3px]">Heat Map (nodes)</span>
        </div>
        <div className="flex w-[147px] items-center rounded-r-[4px] border border-l-0 border-[#bfbfbf] bg-white pl-[11px]">
          <MapIcon light /><span className="ml-[4px] tracking-[0.3px]">Heat Map (edges)</span>
        </div>
      </div>
    </section>
  );
}

export default function App() {
  return (
    <div className="relative flex h-[848px] w-[1294px] flex-col overflow-hidden bg-[#eeeeee] font-['Noto_Sans','Open_Sans',sans-serif] text-[13px] tracking-[0.2px] text-[#111]">
      <header className="relative flex h-[20px] shrink-0 items-center border-b border-[#aeaeae] bg-linear-to-b from-[#e9e9e9] to-[#d3d3d3] pl-[3px]">
        <Lights title />
        <span className="absolute inset-x-0 pr-[4px] text-center font-['Inter'] text-[12.5px] leading-[18px] tracking-[0.1px] text-[#4a4a4a]">Session: New Session</span>
      </header>
      <Toolbar />
      <Notification />
      <main className="flex h-[752px] shrink-0">
        <ControlPanel />
        <div className="flex w-[4px] shrink-0 items-center"><span className="h-[5px] w-[4px] rounded-full bg-[#cfcfcf]" /></div>
        <div className="w-[805px] shrink-0">
          <div className="flex h-[450px]">
            <div className="h-[450px] w-[647px] shrink-0 bg-[#4169aa]">
              <div className="h-[423px] w-[552px] overflow-hidden rounded-t-[4px] border-x border-b border-[#a9a9a9] bg-[#cecdeb]">
                <div className="relative flex h-[22px] items-center border-b border-[#aeaeae] bg-linear-to-b from-[#ececec] to-[#d6d6d6] pl-[8px]">
                  <Lights />
                  <span className="absolute inset-x-0 pt-px text-center text-[12.5px] tracking-[0.35px] text-black">EM1_Enrichment Map</span>
                </div>
                <NetworkCanvas />
              </div>
            </div>
            <div className="flex w-[9px] shrink-0 items-center"><span className="h-[9px] w-[9px] border border-white bg-[#eee] p-[1px]"><span className="block h-[5px] w-[5px] rounded-full bg-[#c9c9c9]" /></span></div>
            <ResultsPanel />
          </div>
          <div className="flex h-[3px] justify-center bg-white"><span className="h-[3px] w-[6px] bg-[#cccccc]" /></div>
          <TablePanel />
        </div>
      </main>
      <footer className="flex flex-1 items-center justify-between border-t border-[#cfcfcf] px-[5px] pr-[9px]">
        <div className="flex h-[20px] w-[28px] items-center justify-center border border-[#adadad] bg-[#f6f6f6]">
          <svg className="h-[12px] w-[14px]" viewBox="0 0 14 12"><path d="M0 .5h3v2.500H0zM4 .5h10v2H4zM0 4.800h3v2.500H0zM4 5h10v2H4zM0 9.200h3v2.500H0zM4 9.500h10v2H4z" /></svg>
        </div>
        <div className="flex h-[24px] w-[75px] items-center border border-[#adadad] bg-[#f3f3f3] pl-[7px] text-[11px] tracking-[-0.1px]">
          <span className="mr-[5px] h-[12px] w-[12px] rounded-full bg-[#0b8f36]" />Memory
        </div>
      </footer>
    </div>
  );
}
